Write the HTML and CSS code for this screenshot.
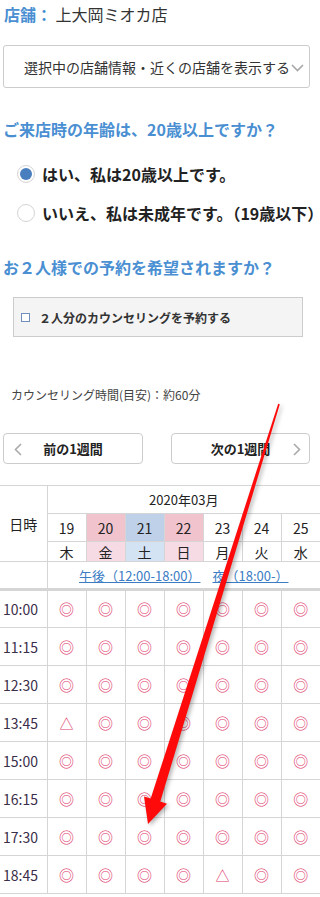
FILE: index.html
```html
<!DOCTYPE html>
<html lang="ja">
<head>
    <meta charset="UTF-8">
    <meta name="viewport" content="width=device-width, initial-scale=1.0">
    <title>予約</title>
    <link rel="stylesheet" href="styles.css">
</head>
<body>
    <div class="shop"><span class="shop-label">店舗：</span> 上大岡ミオカ店</div>

    <div class="store-select">
        <span>選択中の店舗情報・近くの店舗を表示する</span>
        <svg class="chev-down" width="13" height="8" viewBox="0 0 13 8"><polyline points="1,1 6.5,6.5 12,1" fill="none" stroke="#a8a8a8" stroke-width="1.6"/></svg>
    </div>

    <div class="question q1">ご来店時の年齢は、20歳以上ですか？</div>
    <div class="options">
        <div class="option"><span class="radio checked"></span>はい、私は20歳以上です。</div>
        <div class="option"><span class="radio"></span>いいえ、私は未成年です。（19歳以下）</div>
    </div>

    <div class="question q2">お２人様での予約を希望されますか？</div>
    <div class="pair-box"><span class="check"></span>２人分のカウンセリングを予約する</div>

    <div class="duration">カウンセリング時間(目安)：約60分</div>

    <div class="weeks">
        <div class="week-btn">
            <svg class="chev chev-l" width="8" height="13" viewBox="0 0 8 13"><polyline points="7,1 1.5,6.5 7,12" fill="none" stroke="#aaa" stroke-width="1.6"/></svg>
            前の1週間
        </div>
        <div class="week-btn">
            次の1週間
            <svg class="chev chev-r" width="8" height="13" viewBox="0 0 8 13"><polyline points="1,1 6.5,6.5 1,12" fill="none" stroke="#aaa" stroke-width="1.6"/></svg>
        </div>
    </div>

    <table class="cal">
        <colgroup>
            <col class="c-time">
            <col><col><col><col><col><col><col>
        </colgroup>
        <tr class="r-month">
            <th rowspan="3" class="head-time">日時</th>
            <th colspan="7" class="month">2020年03月</th>
        </tr>
        <tr class="r-date">
            <td>19</td>
            <td class="hol">20</td>
            <td class="sat">21</td>
            <td class="hol">22</td>
            <td>23</td>
            <td>24</td>
            <td>25</td>
        </tr>
        <tr class="r-day">
            <td>木</td>
            <td class="hol-l">金</td>
            <td class="sat-l">土</td>
            <td class="hol-l">日</td>
            <td>月</td>
            <td>火</td>
            <td>水</td>
        </tr>
        <tr class="r-links">
            <td></td>
            <td colspan="7"><a href="#">午後（12:00-18:00）</a><a href="#" class="night">夜（18:00-）</a></td>
        </tr>
        <tr class="slot"><td class="time">10:00</td><td>◎</td><td>◎</td><td>◎</td><td>◎</td><td>◎</td><td>◎</td><td>◎</td></tr>
        <tr class="slot"><td class="time">11:15</td><td>◎</td><td>◎</td><td>◎</td><td>◎</td><td>◎</td><td>◎</td><td>◎</td></tr>
        <tr class="slot"><td class="time">12:30</td><td>◎</td><td>◎</td><td>◎</td><td>◎</td><td>◎</td><td>◎</td><td>◎</td></tr>
        <tr class="slot"><td class="time">13:45</td><td class="tri">△</td><td>◎</td><td>◎</td><td>◎</td><td>◎</td><td>◎</td><td>◎</td></tr>
        <tr class="slot"><td class="time">15:00</td><td>◎</td><td>◎</td><td>◎</td><td>◎</td><td>◎</td><td>◎</td><td>◎</td></tr>
        <tr class="slot"><td class="time">16:15</td><td>◎</td><td>◎</td><td>◎</td><td>◎</td><td>◎</td><td>◎</td><td>◎</td></tr>
        <tr class="slot"><td class="time">17:30</td><td>◎</td><td>◎</td><td>◎</td><td>◎</td><td>◎</td><td>◎</td><td>◎</td></tr>
        <tr class="slot"><td class="time">18:45</td><td>◎</td><td>◎</td><td>◎</td><td>◎</td><td class="tri">△</td><td>◎</td><td>◎</td></tr>
    </table>

    <!-- annotation arrow drawn over the screenshot -->
    <svg class="arrow" width="320" height="897" viewBox="0 0 320 897">
        <polygon points="278.2,403.8 279.8,404.2 160.3,801.6 167,803.7 148,824 144,796.5 150.7,798.6" fill="#ff0a0a"/>
    </svg>
</body>
</html>
```

FILE: styles.css
```css
* {
    box-sizing: border-box;
}

html, body {
    margin: 0;
    padding: 0;
}

body {
    position: relative;
    width: 320px;
    overflow: hidden;
    font-family: "Noto Sans CJK JP", "Noto Sans", sans-serif;
    color: #333;
    background: #fff;
}

.shop {
    height: 28px;
    line-height: 28px;
    padding: 0 4px;
    font-size: 16px;
    color: #333;
}

.shop-label {
    color: #4a8fd2;
    font-weight: bold;
}

.store-select {
    margin: 17px 10px 0 3px;
    height: 43px;
    border: 1px solid #ccc;
    border-radius: 3px;
    display: flex;
    align-items: center;
    padding-left: 20px;
    font-size: 14px;
    color: #333;
    white-space: nowrap;
}

.chev-down {
    margin-left: 1px;
    margin-top: 2px;
}

.question {
    height: 24px;
    line-height: 24px;
    padding-left: 3px;
    font-size: 16px;
    font-weight: bold;
    color: #4a8fd2;
    white-space: nowrap;
}

.q1 {
    margin-top: 29px;
}

.q2 {
    margin-top: 23px;
}

.options {
    margin-top: 13px;
}

.option {
    height: 39px;
    display: flex;
    align-items: center;
    padding-left: 17px;
    font-size: 16px;
    font-weight: bold;
    color: #222;
    white-space: nowrap;
}

.radio {
    width: 18px;
    height: 18px;
    border: 1px solid #d4d4d4;
    border-radius: 50%;
    background: #fff;
    margin-right: 7px;
    flex: none;
    display: flex;
    align-items: center;
    justify-content: center;
}

.radio.checked::after {
    content: "";
    width: 12px;
    height: 12px;
    border-radius: 50%;
    background: #4a7fbf;
}

.pair-box {
    margin: 18px 0 0 13px;
    width: 290px;
    height: 40px;
    border: 1px solid #ccc;
    background: #f4f4f4;
    display: flex;
    align-items: center;
    padding-left: 7px;
    font-size: 12px;
    font-weight: bold;
    color: #333;
}

.check {
    width: 9px;
    height: 9px;
    border: 1px solid #6f8fbf;
    background: #fff;
    margin-right: 9px;
}

.duration {
    margin-top: 48px;
    height: 20px;
    line-height: 20px;
    padding-left: 11px;
    font-size: 12px;
    color: #444;
}

.weeks {
    margin-top: 28px;
    display: flex;
    justify-content: space-between;
    padding: 0 10px 0 3px;
}

.week-btn {
    position: relative;
    width: 140px;
    height: 31px;
    border: 1px solid #ccc;
    border-radius: 4px;
    display: flex;
    align-items: center;
    justify-content: center;
    font-size: 13px;
    font-weight: bold;
    color: #222;
}

.week-btn + .week-btn {
    width: 139px;
}

.chev {
    position: absolute;
    top: 9px;
}

.chev-l {
    left: 10px;
}

.chev-r {
    right: 8px;
}

.cal {
    margin-top: 21px;
    width: 320px;
    border-collapse: collapse;
    table-layout: fixed;
    color: #222;
}

.c-time {
    width: 47px;
}

.cal th, .cal td {
    border: 1px solid #d5d5d5;
    padding: 0;
    text-align: center;
    vertical-align: middle;
    font-weight: normal;
    line-height: 18px;
}

.cal tr > :first-child {
    border-left: none;
}

.cal tr > :last-child {
    border-right: none;
}

.head-time {
    font-size: 14px;
}

.month {
    height: 28px;
    font-size: 13px;
}

.r-date td {
    height: 28px;
    font-size: 14px;
}

.r-day td {
    height: 20px;
    font-size: 14px;
}

.r-links td {
    height: 28px;
    border-bottom: 3px solid #d5d5d5;
}

.r-links a {
    font-size: 13px;
    color: #3b7cc4;
    text-decoration: underline;
}

.r-links .night {
    margin-left: 12px;
}

.hol {
    background: #f1c4cd;
}

.hol-l {
    background: #f6dbe5;
}

.sat {
    background: #bed1e9;
}

.sat-l {
    background: #d4e3f3;
}

.slot td {
    height: 38px;
    font-size: 15px;
    color: #de3a6c;
}

.slot td.time {
    text-align: left;
    padding-left: 3px;
    font-size: 14px;
    color: #3a2e4a;
}

.slot .tri {
    font-size: 14px;
}

.arrow {
    position: absolute;
    top: 0;
    left: 0;
    pointer-events: none;
    filter: drop-shadow(2px 2px 2px rgba(0, 0, 0, 0.3));
}
```
